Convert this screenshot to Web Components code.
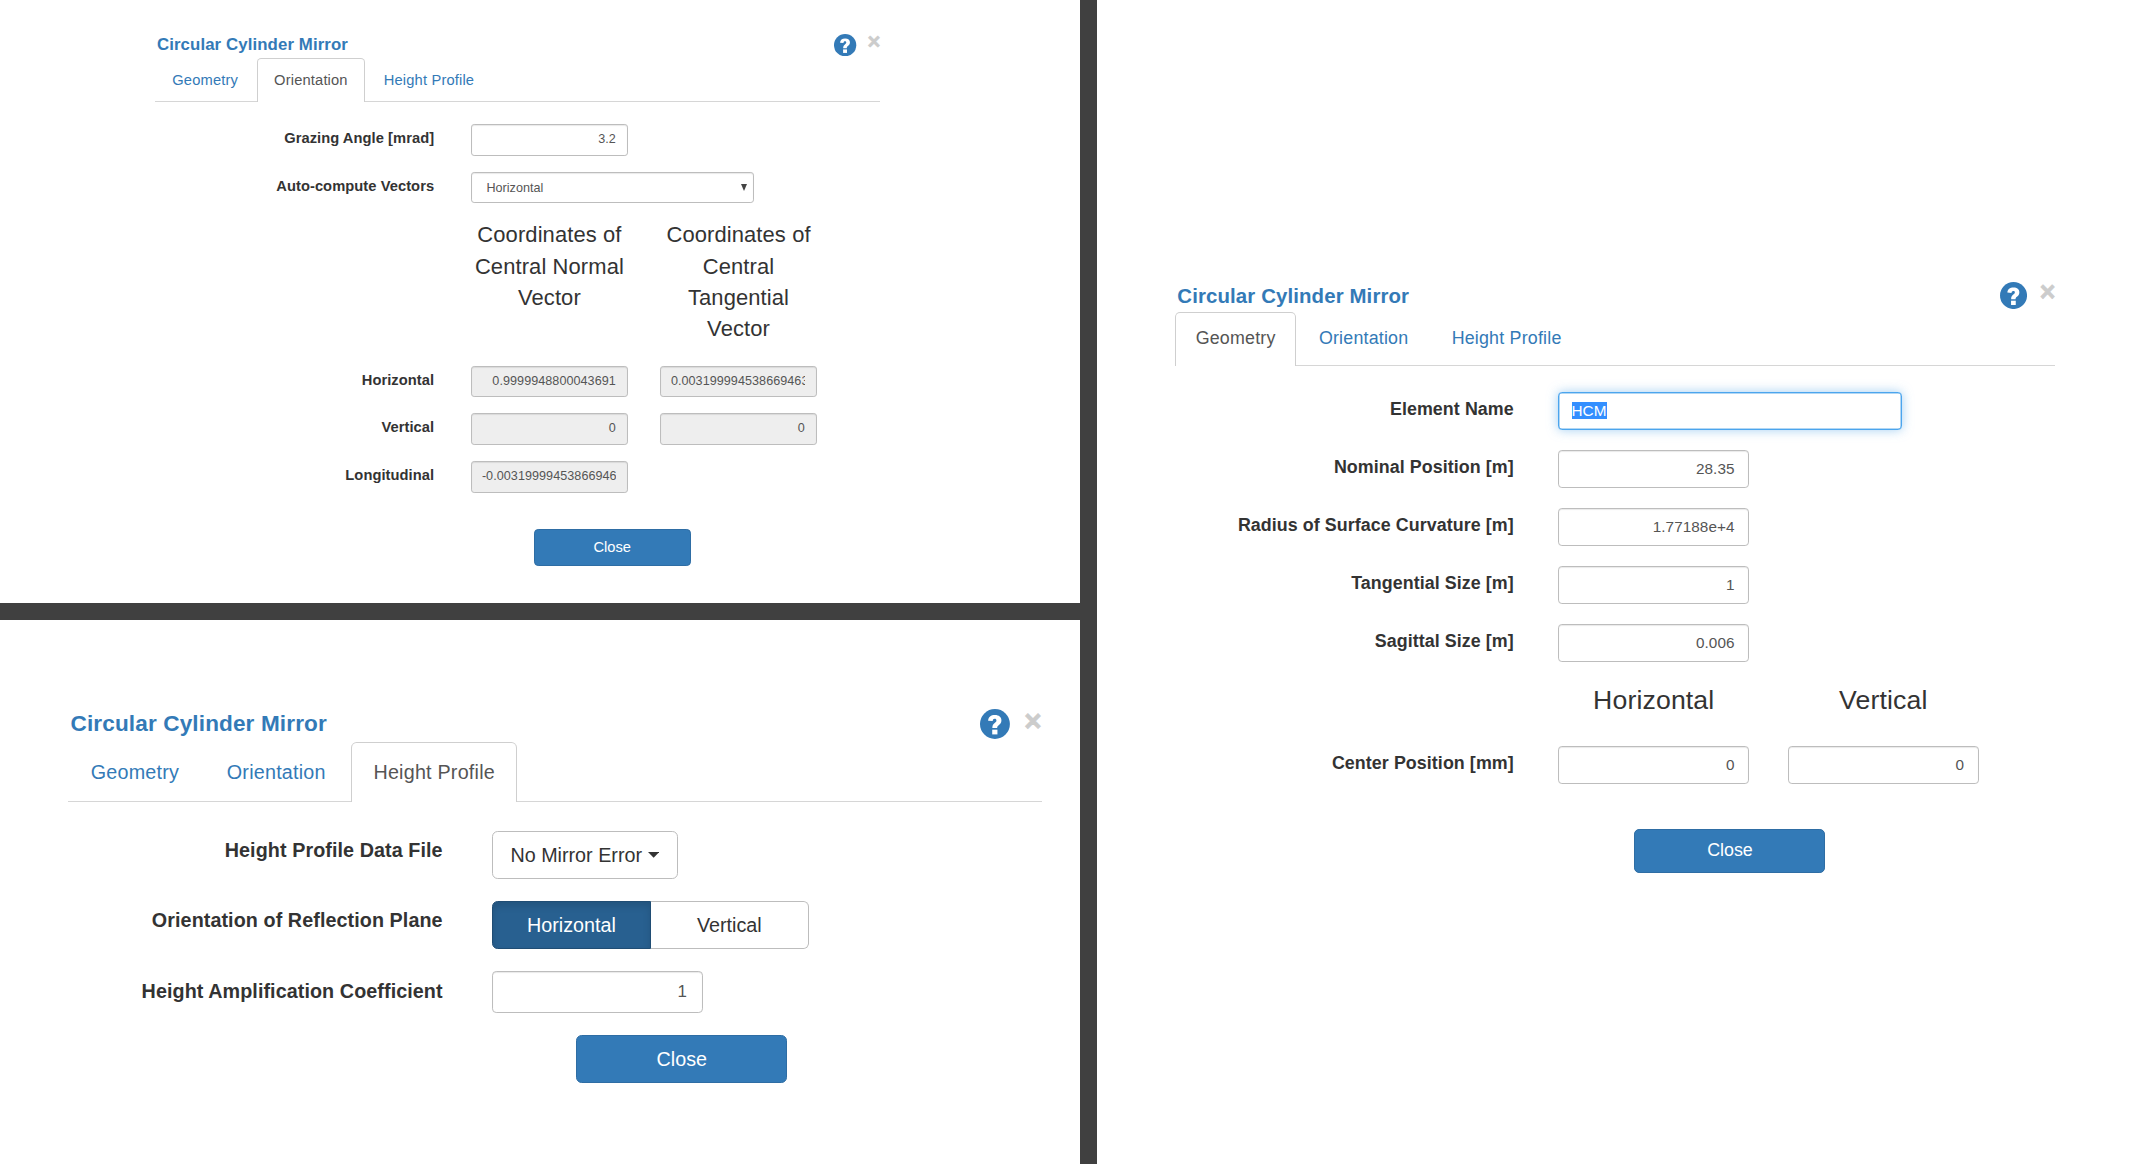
<!DOCTYPE html>
<html lang="en">
<head>
<meta charset="utf-8">
<title>Circular Cylinder Mirror</title>
<style>
html,body{margin:0;height:100%}
body{font-family:"Liberation Sans",Arial,sans-serif;color:#333;background:#404040;overflow:hidden}
.board{display:grid;grid-template-columns:1080px 1fr;grid-template-rows:603px 1fr;gap:17px;height:1164px}
editor-dialog{background:#fff}
.a{--u:1.0507px;padding:32px 0 0 155.3px}
.b{--u:1.4106px;padding:87.3px 0 0 68.3px}
.c{--u:1.2754px;padding:280.2px 0 0 78.3px;grid-column:2;grid-row:1/3}
</style>
</head>
<body>
<main class="board">
  <editor-dialog class="a" heading="Circular Cylinder Mirror" active="Orientation">
    <form-row label="Grazing Angle [mrad]"><text-field>3.2</text-field></form-row>
    <form-row label="Auto-compute Vectors"><select-field>Horizontal</select-field></form-row>
    <form-row class="head"><column-title>Coordinates of Central Normal Vector</column-title><column-title>Coordinates of Central Tangential Vector</column-title></form-row>
    <form-row label="Horizontal"><text-field readonly>0.9999948800043691</text-field><text-field readonly>0.003199994538669463</text-field></form-row>
    <form-row label="Vertical"><text-field readonly>0</text-field><text-field readonly>0</text-field></form-row>
    <form-row label="Longitudinal"><text-field readonly>-0.003199994538669463</text-field></form-row>
    <close-button gap="wide">Close</close-button>
  </editor-dialog>
  <editor-dialog class="c" heading="Circular Cylinder Mirror" active="Geometry">
    <form-row label="Element Name"><text-field wide focused>HCM</text-field></form-row>
    <form-row label="Nominal Position [m]"><text-field>28.35</text-field></form-row>
    <form-row label="Radius of Surface Curvature [m]"><text-field>1.77188e+4</text-field></form-row>
    <form-row label="Tangential Size [m]"><text-field>1</text-field></form-row>
    <form-row label="Sagittal Size [m]"><text-field>0.006</text-field></form-row>
    <form-row class="head"><column-title>Horizontal</column-title><column-title>Vertical</column-title></form-row>
    <form-row label="Center Position [mm]"><text-field>0</text-field><text-field>0</text-field></form-row>
    <close-button gap="wide">Close</close-button>
  </editor-dialog>
  <editor-dialog class="b" heading="Circular Cylinder Mirror" active="Height Profile">
    <form-row label="Height Profile Data File"><menu-button>No Mirror Error</menu-button></form-row>
    <form-row label="Orientation of Reflection Plane"><toggle-group><span slot="on">Horizontal</span><span slot="off">Vertical</span></toggle-group></form-row>
    <form-row label="Height Amplification Coefficient"><text-field>1</text-field></form-row>
    <close-button>Close</close-button>
  </editor-dialog>
</main>
<script>
const define = (name, html, init) => customElements.define(name, class extends HTMLElement {
  constructor() {
    super();
    this.attachShadow({mode: 'open'}).innerHTML = html;
  }
  connectedCallback() { if (init) init(this, this.shadowRoot); }
});

define('help-icon', `<style>
:host{display:block;width:calc(21.2*var(--u));height:calc(21.2*var(--u))}svg{display:block;width:100%;height:100%}
</style><svg viewBox="0 0 24 24"><circle cx="12" cy="12" r="12" fill="#337ab7"/>
<path d="M6.5 9.4C6.7 6.3 8.7 4.8 12 4.8c3.2 0 5.2 1.7 5.2 4.2 0 2-.9 3-2.2 4-1 .8-1.2 1.2-1.2 2.3H9.9c0-2.1.5-3 1.9-4.1 1-.8 1.4-1.2 1.4-2 0-.9-.5-1.3-1.4-1.3-1 0-1.5.6-1.6 1.8z" fill="#fff"/>
<path d="M9.8 16.6h4.2v3.8H9.8z" fill="#fff"/></svg>`);

define('editor-dialog', `<style>
:host{display:block;box-sizing:border-box;min-width:0}
.body{width:calc(690*var(--u));display:flex;flex-direction:column}
header{display:flex;align-items:center;height:calc(24.8*var(--u));gap:calc(10.2*var(--u))}
h4{margin:0;flex:1;padding-left:calc(1.6*var(--u));font-size:calc(16*var(--u));line-height:1.1;color:#337ab7;letter-spacing:.006em}
help-icon{margin-bottom:calc(.6*var(--u))}
.x{font-weight:700;font-size:calc(21*var(--u));line-height:1;color:#ccc;-webkit-text-stroke:calc(.6*var(--u)) #ccc;padding-bottom:calc(5*var(--u))}
nav{display:flex;height:calc(42.2*var(--u));box-sizing:border-box;border-bottom:1px solid #d6d6d6;font-size:calc(14*var(--u));letter-spacing:.011em}
nav a{box-sizing:border-box;height:calc(42.2*var(--u));line-height:calc(20*var(--u));padding:calc(10.5*var(--u)) calc(15.2*var(--u)) 0;border:1px solid transparent;border-bottom:0;border-radius:calc(4*var(--u)) calc(4*var(--u)) 0 0;margin-right:calc(2*var(--u));color:#337ab7}
nav a.on{color:#555;background:#fff;border-color:#cfcfcf}
.rows{display:flex;flex-direction:column;padding-top:calc(20.6*var(--u))}
</style><div class="body"><header><h4></h4><help-icon></help-icon><span class="x">×</span></header>
<nav><a>Geometry</a><a>Orientation</a><a>Height Profile</a></nav><div class="rows"><slot></slot></div></div>`,
(el, root) => {
  root.querySelector('h4').textContent = el.getAttribute('heading');
  root.querySelectorAll('nav a').forEach(a => a.classList.toggle('on', a.textContent === el.getAttribute('active')));
});

define('form-row', `<style>
:host{display:flex;align-items:flex-start;margin-bottom:calc(15.25*var(--u))}
:host(.head){margin-bottom:calc(20.6*var(--u))}
label{box-sizing:border-box;width:calc(265.4*var(--u));margin-right:calc(34.9*var(--u));padding-top:calc(4*var(--u));text-align:right;font-weight:700;font-size:calc(14*var(--u));line-height:calc(20*var(--u));letter-spacing:.004em;white-space:nowrap}
.fields{display:flex;gap:calc(30.3*var(--u));align-items:flex-start}
</style><label></label><div class="fields"><slot></slot></div>`,
(el, root) => { root.querySelector('label').textContent = el.getAttribute('label') || ''; });

define('text-field', `<style>
:host{display:block;box-sizing:border-box;width:calc(149.6*var(--u));height:calc(30.2*var(--u));border:1px solid #bdbdbd;border-radius:calc(3*var(--u));padding:0 calc(10.6*var(--u)) 0 calc(9.6*var(--u));background:#fff;box-shadow:inset 0 1px 1px rgba(0,0,0,.09);font-size:calc(12*var(--u));letter-spacing:.004em;color:#555}
:host([readonly]){background:#eee}
:host([wide]){width:calc(269.6*var(--u))}
:host([focused]){border-color:#4ba5ee;box-shadow:inset 0 0 0 .5px #66afe9,0 0 calc(8*var(--u)) rgba(102,175,233,.6)}
div{height:100%;display:block;overflow:hidden;white-space:nowrap;text-align:right;line-height:calc(27.8*var(--u))}
:host([wide]) div{text-align:left}
:host([focused]) span{background:#338fff;color:#fff}
</style><div><span><slot></slot></span></div>`);

define('select-field', `<style>
:host{display:flex;justify-content:space-between;align-items:center;box-sizing:border-box;width:calc(269.4*var(--u));height:calc(30.2*var(--u));border:1px solid #bdbdbd;border-radius:calc(3*var(--u));padding:0 calc(6*var(--u)) 0 calc(14*var(--u));box-shadow:inset 0 1px 1px rgba(0,0,0,.09);font-size:calc(12*var(--u));color:#555}
svg{width:6px;height:7px}
</style><slot></slot><svg viewBox="0 0 6 7"><path d="M0 0h6L3 7z" fill="#444"/></svg>`);

define('column-title', `<style>
:host{display:block;width:calc(149.7*var(--u));text-align:center;font-size:calc(20.9*var(--u));line-height:calc(29.6*var(--u));letter-spacing:.005em}
</style><slot></slot>`);

define('menu-button', `<style>
:host{display:flex;align-items:center;justify-content:center;gap:calc(4*var(--u));box-sizing:border-box;width:calc(131.6*var(--u));height:calc(34.4*var(--u));border:1px solid #bdbdbd;border-radius:calc(4*var(--u));font-size:calc(14*var(--u));white-space:nowrap}
svg{width:calc(8*var(--u));height:calc(4*var(--u))}
</style><slot></slot><svg viewBox="0 0 8 4"><path d="M0 0h8L4 4z" fill="#333"/></svg>`);

define('toggle-group', `<style>
:host{display:flex;height:calc(34.4*var(--u));font-size:calc(14*var(--u))}
div{display:flex;align-items:center;justify-content:center;box-sizing:border-box;width:calc(111.8*var(--u));border:1px solid #bdbdbd;border-left:0;border-radius:0 calc(4*var(--u)) calc(4*var(--u)) 0}
.on{width:calc(112.8*var(--u));color:#fff;background:#286090;border:1px solid #204d74;border-radius:calc(4*var(--u)) 0 0 calc(4*var(--u));box-shadow:inset 0 calc(3*var(--u)) calc(5*var(--u)) rgba(0,0,0,.125)}
</style><div class="on"><slot name="on"></slot></div><div><slot name="off"></slot></div>`);

define('close-button', `<style>
:host{display:flex;align-items:center;justify-content:center;box-sizing:border-box;width:calc(149.8*var(--u));height:calc(34.4*var(--u));margin-left:calc(360*var(--u));border:1px solid #2e6da4;border-radius:calc(4*var(--u));background:#337ab7;color:#fff;font-size:calc(14*var(--u))}
:host([gap=wide]){margin-top:calc(19.7*var(--u))}
</style><slot></slot>`);
</script>
</body>
</html>
